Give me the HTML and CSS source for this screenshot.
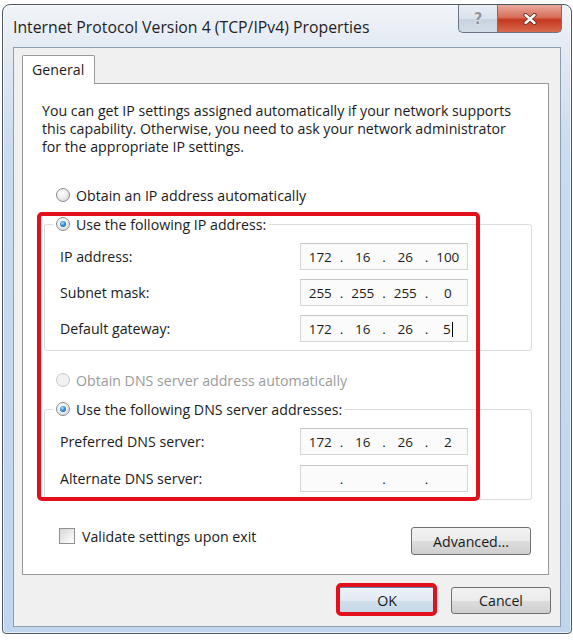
FILE: index.html
```html
<!DOCTYPE html>
<html lang="en">
<head>
    <meta charset="UTF-8">
    <meta name="viewport" content="width=device-width, initial-scale=1.0">
    <title>Internet Protocol Version 4 (TCP/IPv4) Properties</title>
    <link rel="stylesheet" href="styles.css">
</head>
<body>

    <div class="window">
        <div class="titlebar">
            <span class="title">Internet Protocol Version 4 (TCP/IPv4) Properties</span>
            <div class="caption-buttons">
                <span class="cap-btn help">?</span>
                <span class="cap-btn close">
                    <svg width="14" height="12" viewBox="0 0 14 12">
                        <path d="M2.5 2 L11.5 10 M11.5 2 L2.5 10" stroke="#6a2a22" stroke-width="4.2" stroke-linecap="round"/>
                        <path d="M2.5 2 L11.5 10 M11.5 2 L2.5 10" stroke="#fff" stroke-width="2.4" stroke-linecap="round"/>
                    </svg>
                </span>
            </div>
        </div>

        <div class="client">
            <div class="tabs">
                <span class="tab">General</span>
            </div>

            <div class="tab-page">
                <p class="intro">You can get IP settings assigned automatically if your network supports<br>this capability. Otherwise, you need to ask your network administrator<br>for the appropriate IP settings.</p>

                <div class="option standalone"><span class="radio"></span>Obtain an IP address automatically</div>

                <fieldset class="group group-ip">
                    <legend class="option"><span class="radio checked"></span>Use the following IP address:</legend>
                    <div class="field">
                        <span class="field-label">IP address:</span>
                        <div class="ip-box">
                            <span class="octet">172</span><span class="dot">.</span><span class="octet">16</span><span class="dot">.</span><span class="octet">26</span><span class="dot">.</span><span class="octet">100</span>
                        </div>
                    </div>
                    <div class="field">
                        <span class="field-label">Subnet mask:</span>
                        <div class="ip-box">
                            <span class="octet">255</span><span class="dot">.</span><span class="octet">255</span><span class="dot">.</span><span class="octet">255</span><span class="dot">.</span><span class="octet">0</span>
                        </div>
                    </div>
                    <div class="field">
                        <span class="field-label">Default gateway:</span>
                        <div class="ip-box">
                            <span class="octet">172</span><span class="dot">.</span><span class="octet">16</span><span class="dot">.</span><span class="octet">26</span><span class="dot">.</span><span class="octet">5<span class="caret"></span></span>
                        </div>
                    </div>
                </fieldset>

                <div class="option standalone disabled"><span class="radio"></span>Obtain DNS server address automatically</div>

                <fieldset class="group group-dns">
                    <legend class="option"><span class="radio checked"></span>Use the following DNS server addresses:</legend>
                    <div class="field">
                        <span class="field-label">Preferred DNS server:</span>
                        <div class="ip-box">
                            <span class="octet">172</span><span class="dot">.</span><span class="octet">16</span><span class="dot">.</span><span class="octet">26</span><span class="dot">.</span><span class="octet">2</span>
                        </div>
                    </div>
                    <div class="field">
                        <span class="field-label">Alternate DNS server:</span>
                        <div class="ip-box">
                            <span class="octet"></span><span class="dot">.</span><span class="octet"></span><span class="dot">.</span><span class="octet"></span><span class="dot">.</span><span class="octet"></span>
                        </div>
                    </div>
                </fieldset>

                <div class="validate-row">
                    <div class="option"><span class="checkbox"></span>Validate settings upon exit</div>
                    <button class="btn btn-wide">Advanced...</button>
                </div>

                <!-- red marker round the static address settings -->
                <span class="highlight highlight-settings"></span>
            </div>

            <div class="dialog-buttons">
                <button class="btn btn-default">OK<span class="highlight highlight-ok"></span></button>
                <button class="btn">Cancel</button>
            </div>
        </div>
    </div>

</body>
</html>
```

FILE: styles.css
```css
* {
    box-sizing: border-box;
}

body {
    margin: 0;
    background: #fff;
    font-family: "Segoe UI", "Open Sans", sans-serif;
    font-size: 14.2px;
    color: #1b1b1b;
}

/* window frame */
.window {
    width: 570px;
    margin: 4px 0 0 2px;
    padding: 0 10px 6px;
    border: 1px solid #4f5965;
    border-radius: 8px 8px 4px 4px;
    background: linear-gradient(to bottom, #f1f4f8 0, #e4ebf3 40px, #cadcef 140px, #bfd6ee 100%);
    box-shadow: inset 0 0 0 1px rgba(255, 255, 255, 0.6);
}

.titlebar {
    height: 42px;
    display: flex;
    justify-content: space-between;
    align-items: flex-start;
}

.title {
    padding: 12px 0 0 0;
    font-size: 15.8px;
    line-height: 20px;
    color: #1e1e1e;
}

.caption-buttons {
    display: flex;
    margin-right: -1px;
}

.cap-btn {
    height: 28px;
    display: flex;
    align-items: center;
    justify-content: center;
    border: 1px solid #6b7684;
    border-top: none;
}

.help {
    width: 39px;
    border-radius: 0 0 0 5px;
    border-right: none;
    background: linear-gradient(to bottom, #e9eef4 0, #d9e1ea 50%, #c7d2de 51%, #d3dde8 100%);
    font-family: "DejaVu Sans", sans-serif;
    font-size: 15px;
    font-weight: bold;
    color: #8a96a4;
    text-shadow: 0 0 1px #fff, 0 0 2px #fff;
}

.close {
    width: 65px;
    border-radius: 0 0 5px 0;
    background: linear-gradient(to bottom, #e9a99b 0, #d8705c 45%, #c5381f 55%, #d76a4f 100%);
}

/* client area */
.client {
    height: 580px;
    padding: 7px 9px 11px 8px;
    border: 1px solid #8d9eb0;
    background: #f0f0f0;
}

.tabs {
    display: flex;
}

.tab {
    height: 29px;
    margin-bottom: -1px;
    padding: 4px 0 0 9px;
    width: 73px;
    border: 1px solid #999;
    border-bottom: none;
    border-radius: 2px 2px 0 0;
    background: #fff;
    position: relative;
    z-index: 1;
}

.tab-page {
    position: relative;
    margin-right: 2px;
    padding: 18px 16px 19px 19px;
    border: 1px solid #999;
    background: #fff;
}

.intro {
    margin: 0;
    line-height: 18px;
}

.option {
    display: flex;
    align-items: center;
    height: 18px;
    white-space: nowrap;
}

.option.standalone {
    margin-left: 14px;
    margin-top: 30px;
}

.option.disabled {
    color: #9b9b9b;
    margin-top: 20px;
}

.radio {
    position: relative;
    flex: none;
    width: 14px;
    height: 14px;
    margin-right: 6px;
    border: 1px solid #8c8c8c;
    border-radius: 50%;
    background: radial-gradient(circle at 40% 35%, #fff 0, #eee 45%, #cdcdcd 100%);
}

.radio.checked::after {
    content: "";
    position: absolute;
    inset: 3px;
    border-radius: 50%;
    background: radial-gradient(circle at 40% 35%, #b3e0fa 0, #3b8fd1 45%, #1b4f88 100%);
}

.disabled .radio {
    border-color: #c8c8c8;
    background: #f1f1f1;
}

.checkbox {
    flex: none;
    width: 16px;
    height: 16px;
    margin: 0 7px 0 2px;
    border: 1px solid #8e8f8f;
    background: linear-gradient(135deg, #d6d6d6 0, #f4f4f4 70%, #fff 100%);
}

/* group boxes */
.group {
    margin: 11px 0 0 2px;
    padding: 10px 0 8px 8px;
    border: 1px solid #dcdcdc;
    border-radius: 3px;
}

.group legend {
    padding: 0 3px;
}

.group-ip .field + .field {
    margin-top: 9px;
}

.group-dns {
    padding-bottom: 7px;
}

.group-dns .field + .field {
    margin-top: 10px;
}

.field {
    display: flex;
    align-items: center;
    margin-left: 7px;
}

.field-label {
    width: 240px;
}

.ip-box {
    display: flex;
    align-items: center;
    width: 168px;
    height: 27px;
    border: 1px solid #d4d6d9;
    border-top-color: #c3c6ca;
    background: #fbfbfb;
    font-size: 13.5px;
}

.octet {
    flex: 1;
    text-align: center;
}

.dot {
    width: 4px;
    text-align: center;
}

.caret {
    display: inline-block;
    width: 1px;
    height: 15px;
    margin-left: 1px;
    vertical-align: -3px;
    background: #000;
}

.validate-row {
    display: flex;
    justify-content: space-between;
    align-items: flex-start;
    margin-top: 27px;
    padding: 0 1px 0 15px;
}

/* push buttons */
.btn {
    position: relative;
    width: 100px;
    height: 27px;
    padding: 0;
    border: 1px solid #707070;
    border-radius: 3px;
    background: linear-gradient(to bottom, #f2f2f2 0, #ebebeb 50%, #dddddd 51%, #cfcfcf 100%);
    font-family: inherit;
    font-size: 14.2px;
    color: #1b1b1b;
}

.btn-wide {
    width: 120px;
    height: 28px;
}

.btn-default {
    border-color: #5a86ab;
    background: linear-gradient(to bottom, #edf3f8 0, #e0eaf3 50%, #d0dfec 51%, #c5d7e7 100%);
}

.dialog-buttons {
    display: flex;
    justify-content: flex-end;
    gap: 14px;
    margin-top: 12px;
}

/* red marker frames */
.highlight {
    position: absolute;
    border: 4px solid #e3101b;
    border-radius: 5px;
    pointer-events: none;
}

.highlight-settings {
    left: 14px;
    top: 128px;
    width: 443px;
    height: 289px;
}

.highlight-ok {
    left: -2px;
    right: -1px;
    top: -5px;
    bottom: -3px;
}
```
